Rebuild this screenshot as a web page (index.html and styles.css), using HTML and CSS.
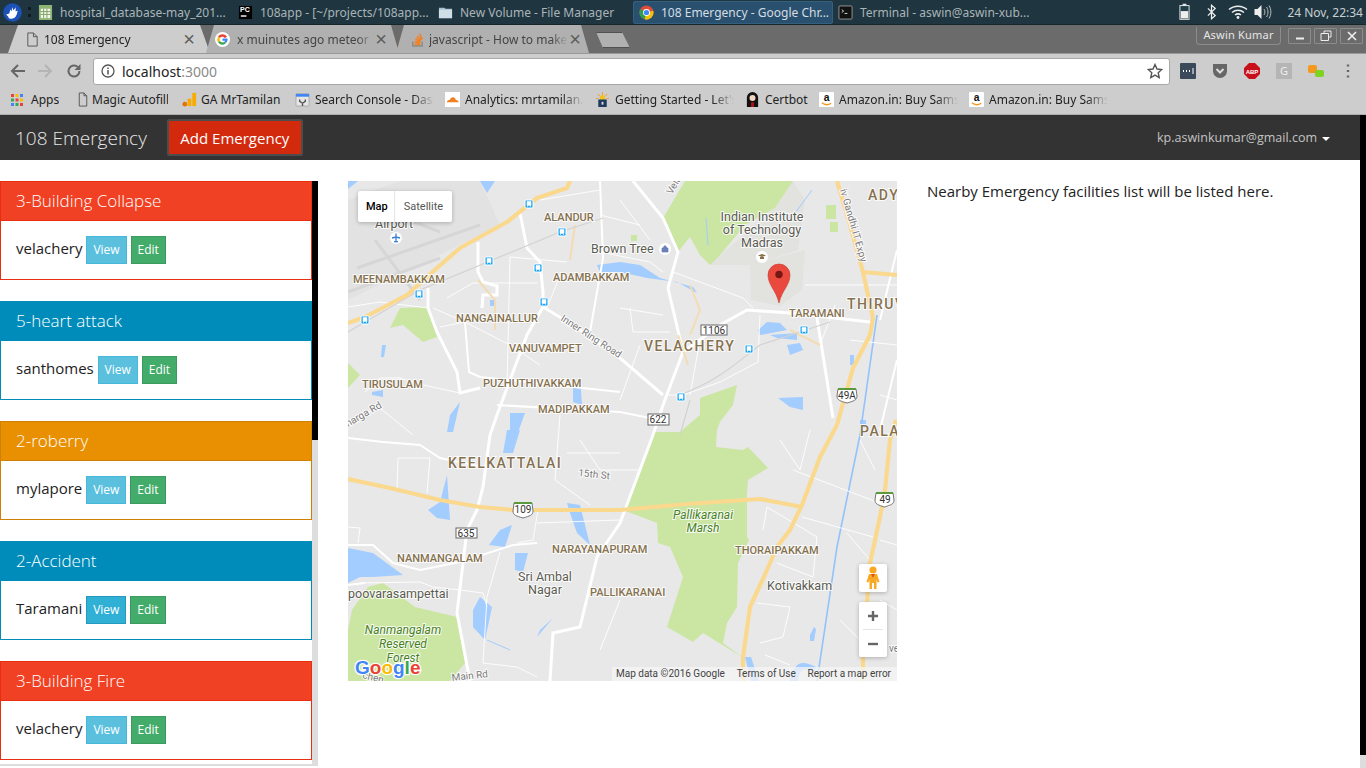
FILE: index.html
```html
<!DOCTYPE html>
<html lang="en">
<head>
  <meta charset="UTF-8" />
  <title>108 Emergency</title>
  <link rel="stylesheet" href="styles.css">
</head>
<body>
  <div class="panel">
    <svg class="whisker" viewBox="0 0 18 18"><circle cx="9" cy="9" r="8.800" fill="#1c52b8"/><path d="M3 11l3-1 1-4 1 2 1-4 1 3 2-3v4l2-1-1 4c-1 3-3 4-5 4-2 0-3-1-3-2z" fill="#fff"/></svg>
    <div class="panel-handle"></div>
    <div class="task">
      <svg class="task-icon" viewBox="0 0 16 16"><rect x="1" y="0" width="14" height="16" fill="#8fb573"/><rect x="3" y="4" width="10" height="10" fill="#f2f6ea"/><path d="M3 7h10M3 10h10M6 4v10M9.500 4v10" stroke="#7c9e62"/></svg>
      <span>hospital_database-may_201...</span>
    </div>
    <div class="task">
      <svg class="task-icon" viewBox="0 0 16 16"><rect x="1" y="1" width="14" height="14" fill="#000"/><rect x="3" y="11" width="6" height="1.500" fill="#fff"/></svg>
      <b class="pc-label">PC</b>
      <span>108app - [~/projects/108app...</span>
    </div>
    <div class="task">
      <svg class="task-icon" viewBox="0 0 16 16"><path d="M1 3h6l1 1h7v10H1z" fill="#a9c0d0"/><rect x="1" y="5" width="14" height="9" fill="#cfdde6"/></svg>
      <span>New Volume - File Manager</span>
    </div>
    <div class="task task-active">
      <svg class="task-icon" viewBox="0 0 16 16"><circle cx="8" cy="8" r="7.500" fill="#dd4b39"/><path d="M8 8L1.500 4.200A7.500 7.500 0 0 0 6 15.300z" fill="#2f9e4f"/><path d="M8 8l7.200-2A7.500 7.500 0 0 1 6 15.300z" fill="#f4c20d"/><circle cx="8" cy="8" r="3.700" fill="#fff"/><circle cx="8" cy="8" r="2.800" fill="#4285f4"/></svg>
      <span>108 Emergency - Google Chr...</span>
    </div>
    <div class="task">
      <svg class="task-icon" viewBox="0 0 16 16"><rect x="1" y="1" width="14" height="14" rx="1" fill="#111" stroke="#999"/><path d="M4 5l2 1.500L4 8M7 9h3" stroke="#ddd" fill="none"/></svg>
      <span>Terminal - aswin@aswin-xub...</span>
    </div>
    <div class="tray">
      <svg class="tray-battery" viewBox="0 0 12 18" width="11" height="18"><rect x="4" y="0" width="4" height="2" fill="#eee"/><rect x="1" y="2" width="10" height="15" fill="#23404a" stroke="#eee"/><rect x="2" y="8" width="8" height="8" fill="#eee"/></svg>
      <svg class="tray-bt" viewBox="0 0 10 16" width="9" height="16"><path d="M1 4l8 8-4 3.500V.500L9 4l-8 8" fill="none" stroke="#eee" stroke-width="1.400"/></svg>
      <svg class="tray-wifi" viewBox="0 0 20 14" width="20" height="14"><path d="M1 4.500c5-4.500 13-4.500 18 0M4 7.500c3.500-3 8.500-3 12 0M7 10c2-1.500 4-1.500 6 0" fill="none" stroke="#eee" stroke-width="1.500"/><circle cx="10" cy="12.500" r="1.400" fill="#eee"/></svg>
      <svg class="tray-vol" viewBox="0 0 18 16" width="19" height="16"><path d="M1 5h3l4-4v14l-4-4H1z" fill="#eee"/><path d="M10.500 5c1.200 2 1.200 4 0 6M13 3c2 3 2 7 0 10M15.500 1.500c2.500 4 2.500 9 0 13" fill="none" stroke="#bbb"/></svg>
      <span class="clock">24 Nov, 22:34</span>
    </div>
  </div>

  <div class="tabstrip">
    <div class="tab tab-active">
      <svg class="tab-icon" viewBox="0 0 14 16"><path d="M2 1h6l4 4v10H2z M8 1v4h4" fill="none" stroke="#555"/></svg>
      <span class="tab-title">108 Emergency</span>
      <span class="tab-close">×</span>
    </div>
    <div class="tab tab-google">
      <svg class="tab-icon" viewBox="0 0 16 16"><circle cx="8" cy="8" r="8" fill="#fff"/><path d="M12.800 5.200A5.500 5.500 0 0 0 3.300 5l2 1.500a3 3 0 0 1 5-.2z" fill="#ea4335"/><path d="M3.300 5a5.500 5.500 0 0 0 0 6l2-1.500a3 3 0 0 1 0-3z" fill="#fbbc05"/><path d="M3.300 11a5.500 5.500 0 0 0 8.600.8l-1.900-1.500a3 3 0 0 1-4.700-.8z" fill="#34a853"/><path d="M8 7v2.200h3a3 3 0 0 1-1 1.100l1.900 1.500c1.200-1.200 1.800-3 1.400-4.800z" fill="#4285f4"/></svg>
      <span class="tab-title">x muinutes ago meteor</span>
      <span class="tab-close">×</span>
    </div>
    <div class="tab tab-so">
      <svg class="tab-icon" viewBox="0 0 16 16"><path d="M3 10v5h10v-5" fill="none" stroke="#8f8a82" stroke-width="1.600"/><path d="M5 13h6M5 10.300l6 1M5.800 7.500l5.500 2.500M7.500 4.800l4.500 3.800M10 2l3 5.500" stroke="#f47f20" stroke-width="1.800" fill="none"/></svg>
      <span class="tab-title">javascript - How to make</span>
      <span class="tab-close">×</span>
    </div>
    <div class="tab-new"></div>
    <div class="profile">Aswin Kumar</div>
    <div class="win-buttons">
      <div class="win-btn"><svg viewBox="0 0 12 12" width="12" height="12"><path d="M2 8.500h8" stroke="#eee" stroke-width="2"/></svg></div>
      <div class="win-btn"><svg viewBox="0 0 12 12" width="12" height="12"><path d="M4 3V1h7v6H9M1 3.500h7.500v7H1z" fill="none" stroke="#eee"/></svg></div>
      <div class="win-btn"><svg viewBox="0 0 12 12" width="12" height="12"><path d="M2 2l8 8M10 2l-8 8" stroke="#eee" stroke-width="1.600"/></svg></div>
    </div>
  </div>

  <div class="toolbar">
    <svg class="nav-icon" viewBox="0 0 16 16"><path d="M15 8H2M8 2L2 8l6 6" fill="none" stroke="#666" stroke-width="2"/></svg>
    <svg class="nav-icon" viewBox="0 0 16 16"><path d="M1 8h13M8 2l6 6-6 6" fill="none" stroke="#b4b4b4" stroke-width="2"/></svg>
    <svg class="nav-icon nav-reload" viewBox="0 0 16 16"><path d="M13.500 8a5.500 5.500 0 1 1-1.600-3.900" fill="none" stroke="#666" stroke-width="2"/><path d="M14.500 1v6h-6z" fill="#666"/></svg>
    <div class="omnibox">
      <svg class="info-icon" viewBox="0 0 14 14"><circle cx="7" cy="7" r="6" fill="none" stroke="#555" stroke-width="1.300"/><path d="M7 6v4.500M7 3.500v1.500" stroke="#555" stroke-width="1.500"/></svg>
      <span class="url">localhost<span class="url-port">:3000</span></span>
      <svg class="star-icon" viewBox="0 0 16 16"><path d="M8 1.500l2 4.500 4.800.5-3.600 3.200 1 4.800L8 12.100l-4.200 2.400 1-4.800L1.200 6.500 6 6z" fill="none" stroke="#555" stroke-width="1.400"/></svg>
    </div>
    <div class="extensions">
      <svg class="ext" viewBox="0 0 16 16"><rect width="16" height="16" rx="1" fill="#3b4a5a"/><path d="M3 8h1M6 8h1M9 8h1" stroke="#fff" stroke-width="2"/><path d="M13 5v6" stroke="#fff"/></svg>
      <svg class="ext" viewBox="0 0 16 16"><path d="M1 1h14v7a7 7 0 0 1-14 0z" fill="#666"/><path d="M4.500 6L8 9.500 11.500 6" fill="none" stroke="#ddd" stroke-width="2"/></svg>
      <svg class="ext" viewBox="0 0 16 16"><path d="M5 0h6l5 5v6l-5 5H5l-5-5V5z" fill="#c8101a"/><text class="abp" x="8" y="10.500">ABP</text></svg>
      <svg class="ext" viewBox="0 0 16 16"><rect width="16" height="16" fill="#b5b5b5"/><text class="ext-g" x="8" y="12">G</text></svg>
      <svg class="ext" viewBox="0 0 16 16"><rect x="0" y="2" width="9" height="8" rx="2" fill="#f39a1e"/><rect x="7" y="7" width="9" height="7" rx="2" fill="#7ed321"/></svg>
      <svg class="ext" viewBox="0 0 16 16"><path d="M8 1.500v2M8 7v2M8 12.500v2" stroke="#666" stroke-width="2.400"/></svg>
    </div>
  </div>

  <div class="bookmarks">
    <div class="bm bm-apps">
      <svg class="bm-icon" viewBox="0 0 12 12"><path d="M0 0h3v3H0z" fill="#ea4335"/><path d="M4.500 0h3v3h-3z" fill="#fbbc05"/><path d="M9 0h3v3H9z" fill="#4285f4"/><path d="M0 4.500h3v3H0z" fill="#34a853"/><path d="M4.500 4.500h3v3h-3z" fill="#ea4335"/><path d="M9 4.500h3v3H9z" fill="#fbbc05"/><path d="M0 9h3v3H0z" fill="#4285f4"/><path d="M4.500 9h3v3h-3z" fill="#34a853"/><path d="M9 9h3v3H9z" fill="#ea4335"/></svg>
      <span>Apps</span>
    </div>
    <div class="bm bm-magic">
      <svg class="bm-icon" viewBox="0 0 10 16"><path d="M1 1h5l3 3v11H1z M6 1v3h3" fill="none" stroke="#555"/></svg>
      <span>Magic Autofill</span>
    </div>
    <div class="bm bm-ga">
      <svg class="bm-icon" viewBox="0 0 16 16"><path d="M11 1h4v14h-4z" fill="#f9ab00"/><path d="M6 7h4v8H6z" fill="#f9ab00"/><circle cx="3" cy="13" r="2.500" fill="#e37400"/></svg>
      <span>GA MrTamilan</span>
    </div>
    <div class="bm bm-long">
      <svg class="bm-icon" viewBox="0 0 16 16"><rect x="1" y="2" width="14" height="13" rx="1" fill="#e6e6e6" stroke="#aaa"/><rect x="1" y="2" width="14" height="3" fill="#4285f4"/><path d="M5 8v2l3 2 3-2V8M8 12v3" stroke="#555" fill="none" stroke-width="1.500"/></svg>
      <span>Search Console - Dashboard</span>
    </div>
    <div class="bm bm-long">
      <svg class="bm-icon" viewBox="0 0 16 16"><rect width="16" height="16" fill="#fff"/><path d="M2 11c0-2 1.500-2.500 3-2.500C6 6 8 5 10 6c1 .5 1.500 1.500 1.500 2.500 2-.2 3 1 3 2.500z" fill="#f38020"/></svg>
      <span>Analytics: mrtamilan.com</span>
    </div>
    <div class="bm bm-long">
      <svg class="bm-icon" viewBox="0 0 16 16"><path d="M8 0v3M3 2l2 2.500M13 2l-2 2.500M1 7h2.500M15 7h-2.500" stroke="#f39a1e"/><circle cx="8" cy="6" r="2.800" fill="#f3c01e"/><rect x="3.500" y="8" width="9" height="8" fill="#1f3a5f"/><rect x="7" y="10.500" width="2" height="3" fill="#ddd"/></svg>
      <span>Getting Started - Let's Encrypt</span>
    </div>
    <div class="bm bm-cert">
      <svg class="bm-icon" viewBox="0 0 16 16"><path d="M2 16V6a6 6 0 0 1 12 0v10z" fill="#111"/><circle cx="8" cy="6.500" r="3.200" fill="#f2d8c0"/><path d="M6.500 11h3v5h-3z" fill="#b5121b"/></svg>
      <span>Certbot</span>
    </div>
    <div class="bm bm-long">
      <svg class="bm-icon" viewBox="0 0 16 16"><rect width="16" height="16" rx="1" fill="#fff"/><text class="amazon-a" x="8" y="10">a</text><path d="M3 11.500c3 2.500 7 2.500 10 .5" fill="none" stroke="#f39a1e" stroke-width="1.400"/></svg>
      <span>Amazon.in: Buy Samsung</span>
    </div>
    <div class="bm bm-long">
      <svg class="bm-icon" viewBox="0 0 16 16"><rect width="16" height="16" rx="1" fill="#fff"/><text class="amazon-a" x="8" y="10">a</text><path d="M3 11.500c3 2.500 7 2.500 10 .5" fill="none" stroke="#f39a1e" stroke-width="1.400"/></svg>
      <span>Amazon.in: Buy Samsung</span>
    </div>
  </div>

  <div class="viewport">
    <div class="page">
      <nav class="navbar">
        <a class="brand">108 Emergency</a>
        <button class="btn-add">Add Emergency</button>
        <div class="user">kp.aswinkumar@gmail.com<span class="caret"></span></div>
      </nav>
      <div class="content">
        <div class="sidebar">
          <div class="list">
            <div class="card card-danger">
              <div class="card-heading">3-Building Collapse</div>
              <div class="card-body">velachery <a class="btn btn-view">View</a> <a class="btn btn-edit">Edit</a></div>
            </div>
            <div class="card card-primary">
              <div class="card-heading">5-heart attack</div>
              <div class="card-body">santhomes <a class="btn btn-view">View</a> <a class="btn btn-edit">Edit</a></div>
            </div>
            <div class="card card-warning">
              <div class="card-heading">2-roberry</div>
              <div class="card-body">mylapore <a class="btn btn-view">View</a> <a class="btn btn-edit">Edit</a></div>
            </div>
            <div class="card card-primary">
              <div class="card-heading">2-Accident</div>
              <div class="card-body">Taramani <a class="btn btn-view btn-hover">View</a> <a class="btn btn-edit">Edit</a></div>
            </div>
            <div class="card card-danger">
              <div class="card-heading">3-Building Fire</div>
              <div class="card-body">velachery <a class="btn btn-view">View</a> <a class="btn btn-edit">Edit</a></div>
            </div>
          </div>
          <div class="list-scroll"><div class="list-thumb"></div></div>
        </div>

        <div class="map">
          <svg class="map-canvas" viewBox="348 181 549 500" width="549" height="500">
            <defs>
              <g id="bus">
                <rect class="stop-box" x="0" y="0" width="8" height="8" rx="1"/>
                <path class="stop-bus" d="M2 1.500h4v4H2zM2.500 6v1M5.500 6v1"/>
              </g>
            </defs>
            <rect x="348" y="181" width="549" height="500" fill="#e8e8e8"/>

            <!-- airport and campus -->
            <path class="ground" d="M348 300L500 225 480 181H400L348 200z"/>
            <path class="runway" d="M357 268L480 225M348 292L440 258M375 240L420 300M370 205L440 232"/>
            <path class="campus" d="M690 237L710 265 752 265 798 250 805 200 793 181 775 208 720 255zM750 265L751 300 780 306 802 290 805 250z"/>

            <!-- parks -->
            <path class="park" d="M663 218L685 181H793L775 208 745 225 720 255 710 265 700 255 690 237 678 252z"/>
            <path class="park" d="M390 328L400 308 427 307 437 337 423 342 403 325z"/>
            <path class="park" d="M348 363L360 375 348 388z"/>
            <path class="park" d="M352 610L368 587 383 583 415 607 457 617 465 663 450 681H348V630z"/>
            <path class="park" d="M700 398L737 385 733 405 720 422 717 430 716 447 743 450 748 447 768 468 748 480 747 493 747 537 749 540 738 563 737 607 727 623 723 643 742 657 703 633 693 642 667 627 683 577 670 547 658 543 657 523 623 510 655 432 680 432 700 415z"/>
            <path class="park" d="M826 205h10v14h-10zM830 222h8v10h-8zM631 235h6v6h-6z"/>

            <!-- water -->
            <path class="water" d="M597 265L620 262 640 265 660 278 693 287 697 293 677 282 647 278 620 272 600 272z"/>
            <path class="water" d="M758 330L767 322 780 323 787 330 760 335zM770 335L797 333 797 340 777 338zM787 345L800 343 803 350 790 355zM778 398L803 397 803 410 790 407z"/>
            <path class="water" d="M510 413L525 413 517 435H510zM507 430H520L513 453H503zM573 388L580 378 582 405 573 402zM372 392L383 390 383 397 372 395zM450 415L460 402 453 432H447z"/>
            <path class="water" d="M348 548L373 553 403 575 373 577 360 577 348 583zM428 510L440 502 447 475 450 520 437 518zM489 545L500 530 512 525 505 547zM515 553L528 553 523 572 515 570zM570 513L567 503 580 505 590 545 577 533zM473 610L480 597 492 607 485 640 473 627zM537 637L553 618 540 630z"/>
            <path class="water" d="M348 181h10l-10 8zM480 181l15 0-8 12zM490 300h6v6h-6zM382 345h4l-2 12h-3zM860 420h6v8h-6zM850 355h4v10h-4zM745 657l6 0 8 24h-8zM790 681c4-18 10-22 26-14l-2 5c-12-6-14-2-16 9zM810 635l4-8 2 2-2 12h-4z"/>
            <path class="canal" d="M877 315L860 435 837 547 817 681"/>
            <path class="canal-thin" d="M708 245L706 218M812 190L790 220M487 640L510 650"/>

            <!-- minor roads -->
            <path class="road-thin" d="M447 298L473 283H537M440 327L465 322 510 345 540 365M510 257L507 388M510 257L567 262M560 275L547 308M348 307L380 302 428 308M433 308L465 322M365 392L380 378H400L423 385 460 393M367 412L380 408 413 435M620 308L663 315M630 308L633 332H670M673 272L743 298 753 308M760 315L758 362 720 382 683 395H667M805 285H897M763 530L767 507 817 537 813 577 777 563M793 470L890 507M802 517L873 537M847 533L870 560M757 603L790 607 783 637 760 643M398 458H430L427 493M398 458L397 490M567 453H620M538 510L533 540 517 543M537 523L620 520M500 552L487 597 483 663 517 667 537 677M348 527L360 528 358 543M360 583L420 582 433 587 460 590 483 593 487 607M620 200L650 240M590 250L650 262 663 272M835 305L820 345M850 340L897 345M880 395L897 400M860 440L875 470M780 440L800 470M640 470L600 470 580 440M560 415L555 480 590 505M640 345L620 400M700 340L690 395M840 620L860 640M620 600L600 650M880 540L897 545M880 600L897 610M765 655L790 665M810 430L800 470M540 200L600 190M600 215L640 225"/>

            <!-- main white roads -->
            <path class="road" d="M520 213L527 248 540 262 543 292 543 307 527 335 507 388 497 415 490 435 483 487 477 510 467 530 463 563 457 613 470 681"/>
            <path class="road" d="M428 288V308L437 332 457 372 460 393 480 388"/>
            <path class="road" d="M478 242V272L483 282 497 286V295H483L482 308"/>
            <path class="road-mid" d="M465 322L469 372 480 377 620 392"/>
            <path class="road" d="M543 307L573 325 620 358 663 395"/>
            <path class="road" d="M633 181L663 218 678 252 668 288 683 352 663 405 653 435 620 523 597 557 580 627 553 633 550 681"/>
            <path class="road" d="M683 352L720 325 747 310 790 313 870 322"/>
            <path class="road" d="M817 318L833 418"/>
            <path class="road-mid" d="M497 405L620 412 650 418M603 258L590 332M603 258L600 181M880 320L897 250M348 438L383 442 420 445 440 458 483 467M348 545L373 545 393 563 420 570 460 562 513 545 537 543M348 585L365 583M880 430L897 360"/>
            <path class="road-tan" d="M478 280L495 300V330M575 225L570 260M690 285L700 310 690 335M790 330L820 345M678 335L688 365"/>
            <path class="rail" d="M348 332L420 290 560 232 603 218M680 395C720 380 740 360 760 345M760 345L830 322M690 400L680 435"/>

            <!-- highways -->
            <path class="hwy" d="M348 323L365 317 407 295 437 268 460 248 507 222 537 198 567 188 570 181"/>
            <path class="hwy" d="M837 181L850 225 863 272 873 318 870 335 853 368 837 425 820 457 802 505 790 530 777 547 767 570 750 607 743 657V681"/>
            <path class="hwy" d="M863 272L897 275"/>
            <path class="hwy" d="M348 479L390 488 440 500 480 507 513 510H620L687 504 760 499 802 507"/>
            <path class="hwy" d="M896 420L890 440 885 490 880 517 870 563 863 657V681"/>

            <!-- transit stops -->
            <use href="#bus" x="525" y="200"/>
            <use href="#bus" x="558" y="228"/>
            <use href="#bus" x="485" y="257"/>
            <use href="#bus" x="534" y="264"/>
            <use href="#bus" x="540" y="298"/>
            <use href="#bus" x="415" y="290"/>
            <use href="#bus" x="361" y="316"/>
            <use href="#bus" x="800" y="326"/>
            <use href="#bus" x="745" y="345"/>
            <use href="#bus" x="677" y="393"/>

            <!-- labels -->
            <g class="place">
              <text x="353" y="283">MEENAMBAKKAM</text>
              <text x="544" y="221">ALANDUR</text>
              <text x="553" y="281">ADAMBAKKAM</text>
              <text x="456" y="322">NANGAINALLUR</text>
              <text x="509" y="352">VANUVAMPET</text>
              <text x="362" y="388">TIRUSULAM</text>
              <text x="483" y="387">PUZHUTHIVAKKAM</text>
              <text x="538" y="413">MADIPAKKAM</text>
              <text x="789" y="317">TARAMANI</text>
              <text x="397" y="562">NANMANGALAM</text>
              <text x="552" y="553">NARAYANAPURAM</text>
              <text x="590" y="596">PALLIKARANAI</text>
              <text x="735" y="554">THORAIPAKKAM</text>
            </g>
            <g class="place-big">
              <text x="644" y="351">VELACHERY</text>
              <text x="448" y="468">KEELKATTALAI</text>
              <text x="847" y="309">THIRUV</text>
              <text x="860" y="436">PALA</text>
              <text x="868" y="200">ADY</text>
            </g>
            <g class="poi">
              <text x="375" y="228">Airport</text>
              <text x="591" y="253">Brown Tree</text>
              <text class="middle" x="762" y="221">Indian Institute</text>
              <text class="middle" x="762" y="234">of Technology</text>
              <text class="middle" x="762" y="247">Madras</text>
              <text class="middle" x="545" y="581">Sri Ambal</text>
              <text class="middle" x="545" y="594">Nagar</text>
              <text x="767" y="590">Kotivakkam</text>
              <text x="348" y="598">poovarasampettai</text>
            </g>
            <g class="forest">
              <text x="403" y="634">Nanmangalam</text>
              <text x="403" y="648">Reserved</text>
              <text x="403" y="662">Forest</text>
              <text x="703" y="519">Pallikaranai</text>
              <text x="703" y="532">Marsh</text>
            </g>
            <g class="street">
              <text x="560" y="320" transform="rotate(33 560 320)">Inner Ring Road</text>
              <text x="578" y="476" transform="rotate(6 578 476)">15th St</text>
              <text x="840" y="190" transform="rotate(74 840 190)">iv Gandhi IT Expy</text>
              <text x="348" y="427" transform="rotate(-30 348 427)">harga Rd</text>
              <text x="672" y="195" transform="rotate(-60 672 195)">Vela</text>
              <text x="452" y="681" transform="rotate(-6 452 681)">Main Rd</text>
              <text x="362" y="678" transform="rotate(14 362 678)">chen</text>
              <text x="889" y="652">ve</text>
            </g>

            <!-- shields -->
            <g class="shield">
              <rect x="701" y="325" width="26" height="10"/><text x="714" y="334">1106</text>
              <rect x="648" y="414" width="21" height="11"/><text x="658" y="423">622</text>
              <rect x="456" y="528" width="21" height="10"/><text x="466" y="537">635</text>
            </g>
            <g class="shield-us">
              <path d="M514 503h18l1 8c0 4-3 5-10 7-7-2-10-3-10-7z"/><path class="shield-top" d="M514 502h18v2h-18z"/><text x="523" y="513">109</text>
              <path d="M838 389h18l1 7c0 4-3 5-10 7-7-2-10-3-10-7z"/><path class="shield-top" d="M838 388h18v2h-18z"/><text x="847" y="399">49A</text>
              <path d="M876 493h17l1 7c0 4-3 5-9.500 7-6.500-2-9.500-3-9.500-7z"/><path class="shield-top" d="M876 492h17v2h-17z"/><text x="885" y="503">49</text>
            </g>

            <!-- poi icons -->
            <circle class="poi-dot" cx="396" cy="238" r="6"/>
            <path d="M396 233.500v9M392 238l4-1 4 1M394 242l2-1 2 1" stroke="#3a7fd5" fill="none" stroke-width="1.300"/>
            <circle class="poi-dot" cx="665" cy="249" r="6"/>
            <path d="M662 248h6v4h-6zM663.500 248c0-3 3-3 3 0" fill="#6b7fb8" stroke="#6b7fb8" stroke-width=".7"/>
            <circle class="poi-dot" cx="762" cy="257" r="6"/>
            <path d="M758 255.500l4-1.500 4 1.500-4 1.500zM760 257v2h4v-2" fill="#8b6f47"/>

            <!-- marker -->
            <path d="M779 303C776 290 768 285 768 275a11 11 0 1 1 22 0C790 285 782 290 779 303z" fill="#ea4a3d" stroke="#c9382d" stroke-width=".6"/>
            <circle cx="779" cy="274.500" r="3.700" fill="#761712"/>

            <!-- logo -->
            <text class="google" x="355" y="674"><tspan fill="#4285f4">G</tspan><tspan fill="#ea4335">o</tspan><tspan fill="#fbbc05">o</tspan><tspan fill="#4285f4">g</tspan><tspan fill="#34a853">l</tspan><tspan fill="#ea4335">e</tspan></text>
          </svg>

          <div class="map-type">
            <div class="map-type-btn map-type-on">Map</div>
            <div class="map-type-btn">Satellite</div>
          </div>
          <div class="map-side">
            <div class="pegman">
              <svg viewBox="0 0 16 24" width="16" height="24"><circle cx="8" cy="4" r="3.600" fill="#f9a825"/><path d="M4 8h8l2.500 8-2 .5-1-3V23H9v-6H7v6H4.500V13.500l-1 3-2-.5z" fill="#f9a825"/><path d="M6 8h4l-2 4z" fill="#d9581a"/></svg>
            </div>
            <div class="zoom-box">
              <div class="zoom-btn">
                <svg viewBox="0 0 12 12" width="12" height="12"><path d="M6 1v10M1 6h10" stroke="#666" stroke-width="2.400"/></svg>
              </div>
              <div class="zoom-rule"></div>
              <div class="zoom-btn">
                <svg viewBox="0 0 12 12" width="12" height="12"><path d="M1 6h10" stroke="#666" stroke-width="2.400"/></svg>
              </div>
            </div>
          </div>
          <div class="attribution">
            <span>Map data ©2016 Google</span>
            <span>Terms of Use</span>
            <span>Report a map error</span>
          </div>
        </div>

        <p class="nearby">Nearby Emergency facilities list will be listed here.</p>
      </div>
    </div>
    <div class="page-scroll"><div class="page-thumb"></div></div>
  </div>
</body>
</html>
```

FILE: styles.css
```css
* {
  box-sizing: border-box;
}
html, body {
  height: 100%;
}
body {
  margin: 0;
  width: 1366px;
  height: 768px;
  overflow: hidden;
  display: flex;
  flex-direction: column;
  background-color: #fff;
  font-family: "Open Sans", sans-serif;
}

/* desktop panel */
.panel {
  height: 25px;
  flex: none;
  display: flex;
  align-items: center;
  padding-left: 3px;
  background-color: #1f3640;
  border-bottom: 1px solid #15252c;
  color: #aab4b8;
  font-family: "Noto Sans", sans-serif;
  font-size: 12px;
  white-space: nowrap;
}
.whisker {
  width: 19px;
  height: 19px;
  flex: none;
}
.panel-handle {
  width: 3px;
  height: 10px;
  margin-left: 6px;
  margin-right: 2px;
  flex: none;
  border-left: 3px dotted #0e1a1f;
}
.task {
  width: 200px;
  height: 23px;
  flex: none;
  display: flex;
  align-items: center;
  gap: 7px;
  padding-left: 5px;
  position: relative;
}
.task-icon {
  width: 15px;
  height: 15px;
  flex: none;
}
.pc-label {
  position: absolute;
  left: 7px;
  top: 5px;
  font-size: 7px;
  color: #fff;
  font-family: "Liberation Sans", sans-serif;
}
.task-active {
  background-color: #2a5070;
  border: 1px solid #34607f;
  border-radius: 2px;
  color: #d5dde0;
}
.tray {
  margin-left: auto;
  display: flex;
  align-items: center;
  padding-right: 3px;
}
.tray-battery {
  margin-right: 17px;
}
.tray-bt {
  margin-right: 12px;
}
.tray-wifi {
  margin-right: 5px;
}
.tray-vol {
  margin-right: 15px;
}
.clock {
  color: #c8d0d3;
}

/* chrome tabs */
.tabstrip {
  height: 28px;
  flex: none;
  display: flex;
  align-items: flex-end;
  padding-left: 8px;
  background-color: #6b6b6b;
  font-family: "Noto Sans", sans-serif;
  font-size: 12px;
}
.tab {
  width: 193px;
  height: 28px;
  flex: none;
  display: flex;
  align-items: center;
  margin-right: -3px;
  padding: 0 13px 0 14px;
  background-color: #b0b0b0;
  color: #444;
  white-space: nowrap;
  clip-path: polygon(0 100%, 8px 0, 185px 0, 193px 100%);
}
.tab-active {
  width: 202px;
  padding: 0 14px 0 17px;
  margin-right: -4px;
  background-color: #cdcdcd;
  color: #222;
  clip-path: polygon(0 100%, 10px 0, 192px 0, 202px 100%);
}
.tab-google {
  padding: 0 11px 0 9px;
}
.tab-google .tab-icon {
  margin-right: 7px;
}
.tab-so {
  padding-right: 7px;
}
.tab-icon {
  width: 15px;
  height: 15px;
  flex: none;
  margin-right: 4px;
}
.tab-title {
  flex: 1;
  overflow: hidden;
  -webkit-mask-image: linear-gradient(to right, #000 88%, transparent);
  mask-image: linear-gradient(to right, #000 88%, transparent);
}
.tab-close {
  width: 14px;
  text-align: center;
  font-size: 20px;
  line-height: 1;
  color: #5c5c5c;
  font-family: "Liberation Sans", sans-serif;
}
.tab-new {
  width: 34px;
  height: 16px;
  flex: none;
  margin-left: 10px;
  margin-bottom: 5px;
  background-color: #b0b0b0;
  border: 1px solid #505050;
  clip-path: polygon(0 0, 26px 0, 34px 100%, 7px 100%);
}
.profile {
  height: 18px;
  width: 85px;
  flex: none;
  margin-left: auto;
  margin-bottom: 8px;
  text-align: center;
  line-height: 16px;
  font-size: 11px;
  letter-spacing: .2px;
  color: #e6e6e6;
  border: 1px solid #8c8c8c;
  border-top: 0;
  border-radius: 0 0 4px 4px;
}
.win-buttons {
  display: flex;
  gap: 3px;
  margin-left: 7px;
  margin-right: 3px;
  margin-bottom: 9px;
}
.win-btn {
  width: 23px;
  height: 16px;
  display: flex;
  align-items: center;
  justify-content: center;
  border: 1px solid #8c8c8c;
  border-radius: 1px;
}

/* chrome toolbar */
.toolbar {
  height: 37px;
  flex: none;
  display: flex;
  align-items: center;
  padding-left: 10px;
  padding-bottom: 2px;
  gap: 11px;
  background-color: #cdcdcd;
  border-top: 1px solid #999;
}
.nav-icon {
  width: 16px;
  height: 16px;
  flex: none;
}
.nav-reload {
  margin-left: 2px;
}
.omnibox {
  width: 1077px;
  height: 27px;
  flex: none;
  display: flex;
  align-items: center;
  padding: 0 6px 0 7px;
  background-color: #fff;
  border: 1px solid #a8a8a8;
  border-radius: 3px;
  font-family: "Noto Sans", sans-serif;
  font-size: 14px;
}
.info-icon {
  width: 14px;
  height: 14px;
  flex: none;
  margin-right: 7px;
}
.url {
  flex: 1;
  color: #222;
}
.url-port {
  color: #8a8a8a;
}
.star-icon {
  width: 16px;
  height: 16px;
  flex: none;
}
.extensions {
  display: flex;
  gap: 16px;
  margin-left: -1px;
}
.ext {
  width: 16px;
  height: 16px;
  flex: none;
}
.abp {
  font: bold 6px "Liberation Sans", sans-serif;
  fill: #fff;
  text-anchor: middle;
}
.ext-g {
  font: 11px "Noto Sans", sans-serif;
  fill: #eee;
  text-anchor: middle;
}
.amazon-a {
  font: bold 11px "Liberation Sans", sans-serif;
  fill: #111;
  text-anchor: middle;
}

/* bookmarks */
.bookmarks {
  height: 25px;
  flex: none;
  display: flex;
  align-items: center;
  padding-left: 11px;
  padding-bottom: 5px;
  background-color: #cdcdcd;
  border-bottom: 1px solid #aeaeae;
  font-family: "Noto Sans", sans-serif;
  font-size: 12px;
  color: #222;
  white-space: nowrap;
}
.bm {
  display: flex;
  align-items: center;
  gap: 5px;
  flex: none;
  overflow: hidden;
}
.bm-icon {
  width: 15px;
  height: 15px;
  flex: none;
}
.bm-apps {
  width: 48px;
  gap: 8px;
  margin-right: 19px;
}
.bm-apps .bm-icon {
  width: 12px;
  height: 12px;
}
.bm-magic {
  width: 90px;
  gap: 4px;
  margin-right: 14px;
}
.bm-magic .bm-icon {
  width: 10px;
}
.bm-ga {
  width: 101px;
  gap: 4px;
  margin-right: 12px;
}
.bm-long {
  width: 139px;
  margin-right: 11px;
}
.bm-long span {
  overflow: hidden;
  -webkit-mask-image: linear-gradient(to right, #000 82%, transparent);
  mask-image: linear-gradient(to right, #000 82%, transparent);
}
.bm-cert {
  width: 63px;
  margin-right: 11px;
}

/* page */
.viewport {
  flex: 1;
  display: flex;
  min-height: 0;
}
.page {
  flex: 1;
  display: flex;
  flex-direction: column;
  min-width: 0;
}
.page-scroll {
  width: 6px;
  flex: none;
  background-color: #ddd;
}
.page-thumb {
  height: 640px;
  background-color: #000;
}
.navbar {
  height: 45px;
  flex: none;
  display: flex;
  align-items: center;
  padding-left: 15px;
  background-color: #333;
}
.brand {
  font-size: 19px;
  font-weight: 300;
  color: #e6e6e6;
}
.btn-add {
  width: 136px;
  height: 37px;
  margin-left: 20px;
  padding: 0;
  background-color: #d32a0e;
  border: 2px solid #4d4d4d;
  border-radius: 2px;
  color: #fff;
  font-family: "Open Sans", sans-serif;
  font-size: 15px;
}
.user {
  margin-left: auto;
  margin-right: 30px;
  color: #c4c4c4;
  font-size: 12.500px;
}
.caret {
  display: inline-block;
  margin-left: 5px;
  vertical-align: middle;
  border-top: 4px solid #fff;
  border-left: 4px solid transparent;
  border-right: 4px solid transparent;
}
.content {
  flex: 1;
  display: flex;
  align-items: flex-start;
  padding-top: 21px;
  min-height: 0;
}

/* emergency list */
.sidebar {
  width: 318px;
  height: 585px;
  flex: none;
  display: flex;
  border-bottom: 2px solid #ddd;
}
.list {
  width: 312px;
  flex: none;
}
.list-scroll {
  width: 6px;
  flex: none;
  margin-bottom: -2px;
  background-color: #ddd;
}
.list-thumb {
  height: 259px;
  background-color: #000;
}
.card {
  height: 99px;
  margin-bottom: 21px;
  border: 1px solid;
}
.card-heading {
  height: 40px;
  margin: -1px -1px 0;
  padding-left: 15px;
  color: #fff;
  font-size: 17px;
  font-weight: 300;
  line-height: 38px;
  border: 1px solid;
}
.card-danger {
  border-color: #ea2f10;
}
.card-danger .card-heading {
  background-color: #f04124;
  border-color: #ea2f10;
}
.card-primary {
  border-color: #008cba;
}
.card-primary .card-heading {
  background-color: #008cba;
  border-color: #008cba;
}
.card-warning {
  border-color: #d08002;
}
.card-warning .card-heading {
  background-color: #e99002;
  border-color: #d08002;
}
.card-body {
  padding: 15px 0 0 15px;
  font-size: 15px;
  line-height: 24px;
  color: #222;
}
.btn {
  display: inline-block;
  height: 28px;
  vertical-align: top;
  padding: 0 6px;
  border: 1px solid;
  color: #fff;
  font-size: 12px;
  line-height: 26px;
}
.btn-view {
  background-color: #5bc0de;
  border-color: #46b8da;
}
.btn-hover {
  background-color: #31b0d5;
  border-color: #269abc;
}
.btn-edit {
  background-color: #43ac6a;
  border-color: #3c9a5f;
}

/* map */
.map {
  width: 549px;
  height: 500px;
  flex: none;
  margin-left: 30px;
  position: relative;
  overflow: hidden;
}
.map-canvas {
  display: block;
}
.ground {
  fill: #e2e2e2;
}
.runway {
  fill: none;
  stroke: #d6d6d6;
  stroke-width: 3;
}
.campus {
  fill: #e2e2df;
}
.park {
  fill: #cbe6a3;
}
.water {
  fill: #a3ccff;
}
.canal {
  fill: none;
  stroke: #93c2fb;
  stroke-width: 1.600;
}
.canal-thin {
  fill: none;
  stroke: #a3ccff;
}
.road-thin {
  fill: none;
  stroke: #fff;
  stroke-width: .9;
}
.road {
  fill: none;
  stroke: #fff;
  stroke-width: 3;
}
.road-mid {
  fill: none;
  stroke: #fff;
  stroke-width: 2;
}
.road-tan {
  fill: none;
  stroke: #f3dcb4;
  stroke-width: 2;
}
.rail {
  fill: none;
  stroke: #d2d2d2;
  stroke-width: 1.200;
}
.hwy {
  fill: none;
  stroke: #fad98e;
  stroke-width: 4.200;
  stroke-linejoin: round;
}
.stop-box {
  fill: #12a3f5;
  stroke: #fff;
  stroke-width: 1;
}
.stop-bus {
  fill: #fff;
  stroke: #fff;
  stroke-width: .6;
}
.place text, .place-big text, .poi text, .forest text, .street text {
  paint-order: stroke;
  stroke: #fff;
  stroke-width: 2px;
  stroke-opacity: .85;
}
.place {
  font: 500 11px Roboto, sans-serif;
  fill: #85714e;
}
.place-big {
  font: 500 14px Roboto, sans-serif;
  letter-spacing: 1.500px;
  fill: #85714e;
}
.poi {
  font: 12.500px Roboto, sans-serif;
  fill: #5b5b52;
}
.middle {
  text-anchor: middle;
}
.forest {
  font: italic 12px Roboto, sans-serif;
  fill: #47801f;
  text-anchor: middle;
}
.street {
  font: 10px Roboto, sans-serif;
  fill: #7b7b7b;
}
.shield rect {
  fill: #fff;
  stroke: #666;
}
.shield text, .shield-us text {
  font: 10px Roboto, sans-serif;
  fill: #333;
  text-anchor: middle;
}
.shield-us path {
  fill: #fff;
  stroke: #555;
  stroke-width: .8;
}
.shield-us .shield-top {
  fill: #5b9a3c;
  stroke: none;
}
.poi-dot {
  fill: #fff;
}
.google {
  font: bold 19px "Liberation Sans", sans-serif;
  paint-order: stroke;
  stroke: #fff;
  stroke-width: 2.500px;
}
.map-type {
  position: absolute;
  left: 10px;
  top: 10px;
  height: 31px;
  display: flex;
  background-color: #fff;
  border-radius: 2px;
  box-shadow: 0 1px 4px rgba(0, 0, 0, .25);
  font-family: Roboto, sans-serif;
  font-size: 11px;
  line-height: 31px;
  color: #565656;
}
.map-type-btn {
  padding: 0 9px;
}
.map-type-on {
  padding: 0 6px 0 8px;
  color: #000;
  font-weight: 500;
  border-right: 1px solid #e6e6e6;
}
.map-side {
  position: absolute;
  right: 10px;
  top: 383px;
  width: 28px;
  display: flex;
  flex-direction: column;
  gap: 10px;
}
.pegman {
  height: 28px;
  display: flex;
  align-items: center;
  justify-content: center;
  background-color: #fff;
  border-radius: 2px;
  box-shadow: 0 1px 4px rgba(0, 0, 0, .25);
}
.zoom-box {
  height: 55px;
  background-color: #fff;
  border-radius: 2px;
  box-shadow: 0 1px 4px rgba(0, 0, 0, .25);
}
.zoom-btn {
  height: 27px;
  display: flex;
  align-items: center;
  justify-content: center;
}
.zoom-rule {
  height: 1px;
  margin: 0 4px;
  background-color: #e6e6e6;
}
.attribution {
  position: absolute;
  right: 0;
  bottom: 0;
  width: 285px;
  height: 14px;
  display: flex;
  justify-content: space-between;
  padding: 0 6px 0 4px;
  background-color: rgba(245, 245, 245, .75);
  font-family: Roboto, sans-serif;
  font-size: 10px;
  line-height: 14px;
  color: #444;
}
.nearby {
  margin: 0 0 0 30px;
  font-size: 15px;
  line-height: 21px;
  color: #222;
}
```
